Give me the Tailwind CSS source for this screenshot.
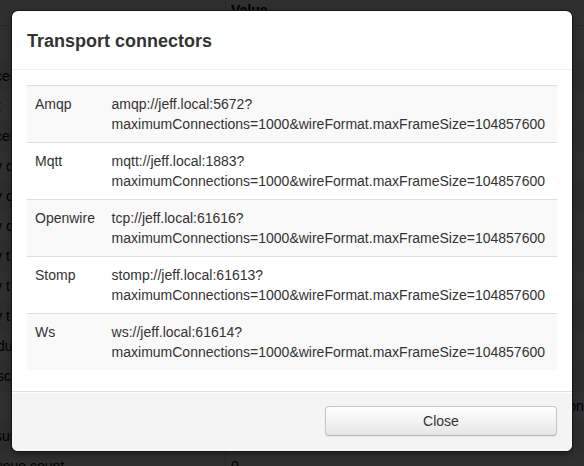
<!DOCTYPE html>
<html lang="en">
<head>
<meta charset="utf-8">
<title>Transport connectors</title>
<script src="https://cdn.jsdelivr.net/npm/@tailwindcss/browser@4"></script>
</head>
<body class="relative h-screen overflow-hidden bg-[#2f2f2f] font-['Liberation_Sans',Arial,sans-serif] text-sm leading-5 text-[#333]">

<!-- Dimmed page behind the dialog -->
<div class="absolute inset-0 overflow-hidden text-black" aria-hidden="true">
  <div class="flex h-[26px] border-b border-[#262626] font-bold"><div class="w-[225px] shrink-0"></div><div class="border-l border-[#262626] pl-[5px]">Value</div></div>
  <div class="h-[35px] bg-[#2f2f2f]"></div>
  <div class="h-[30px] bg-[#2d2d2d] pt-[5px]"><span class="-ml-[5px]">cer</span></div>
  <div class="h-[30px] bg-[#2f2f2f] pt-[5px] text-[#001a29]"><span class="-ml-[3px]">t</span></div>
  <div class="h-[30px] bg-[#2d2d2d] pt-[5px]"><span class="-ml-[5px]">cer</span></div>
  <div class="h-[30px] bg-[#2f2f2f] pt-[5px]"><span class="-ml-[5px]">y c</span></div>
  <div class="h-[30px] bg-[#2d2d2d] pt-[5px]"><span class="-ml-[5px]">y c</span></div>
  <div class="h-[30px] bg-[#2f2f2f] pt-[5px]"><span class="-ml-[5px]">y c</span></div>
  <div class="h-[30px] bg-[#2d2d2d] pt-[5px]"><span class="-ml-[5px]">y t</span></div>
  <div class="h-[30px] bg-[#2f2f2f] pt-[5px]"><span class="-ml-[5px]">y t</span></div>
  <div class="h-[30px] bg-[#2d2d2d] pt-[5px]"><span class="-ml-[5px]">y t</span></div>
  <div class="h-[30px] bg-[#2f2f2f] pt-[5px]"><span class="-ml-[3px]">du</span></div>
  <div class="h-[30px] bg-[#2d2d2d] pt-[5px]"><span class="-ml-[3px]">sc</span></div>
  <div class="flex h-[30px] justify-end bg-[#2f2f2f] pt-[5px]"><span class="-mr-[3px]">onl</span></div>
  <div class="h-[30px] bg-[#2d2d2d] pt-[5px]"><span class="-ml-[5px]">sur</span></div>
  <div class="flex h-[30px] bg-[#2f2f2f]"><div class="w-[225px] shrink-0 pt-[5px]"><span class="-ml-[5px]">ueue count</span></div><div class="border-l border-[#262626] pt-[5px] pl-[5px]">0</div></div>
</div>

<!-- Dialog -->
<section role="dialog" aria-labelledby="dialog-title" class="relative mx-3 mt-[11px] overflow-hidden rounded-md bg-white shadow-[0_0_0_1px_#161616,0_3px_7px_rgba(0,0,0,0.4)]">
  <header class="border-b border-[#eee] px-[15px] pt-[15px] pb-[13px]">
    <h1 id="dialog-title" class="text-lg leading-[30px] font-bold">Transport connectors</h1>
  </header>
  <div class="px-[15px] pt-[15px] pb-[21px]">
    <table class="w-full text-left">
      <tbody>
        <tr class="border-t border-[#ddd] bg-[#f9f9f9] align-top"><th scope="row" class="p-2 font-normal">Amqp</th><td class="p-2">amqp://jeff.local:5672?<br>maximumConnections=1000&amp;wireFormat.maxFrameSize=104857600</td></tr>
        <tr class="border-t border-[#ddd] align-top"><th scope="row" class="p-2 font-normal">Mqtt</th><td class="p-2">mqtt://jeff.local:1883?<br>maximumConnections=1000&amp;wireFormat.maxFrameSize=104857600</td></tr>
        <tr class="border-t border-[#ddd] bg-[#f9f9f9] align-top"><th scope="row" class="p-2 font-normal">Openwire</th><td class="p-2">tcp://jeff.local:61616?<br>maximumConnections=1000&amp;wireFormat.maxFrameSize=104857600</td></tr>
        <tr class="border-t border-[#ddd] align-top"><th scope="row" class="p-2 font-normal">Stomp</th><td class="p-2">stomp://jeff.local:61613?<br>maximumConnections=1000&amp;wireFormat.maxFrameSize=104857600</td></tr>
        <tr class="border-t border-[#ddd] bg-[#f9f9f9] align-top"><th scope="row" class="p-2 font-normal">Ws</th><td class="p-2">ws://jeff.local:61614?<br>maximumConnections=1000&amp;wireFormat.maxFrameSize=104857600</td></tr>
      </tbody>
    </table>
  </div>
  <footer class="flex justify-end border-t border-[#ddd] bg-[#f4f4f4] px-[15px] pt-[14px] pb-[15px] shadow-[inset_0_1px_0_#fff]">
    <button type="button" class="h-[30px] w-[232px] rounded border border-[#c5c5c5] border-b-[#b3b3b3] bg-linear-to-b from-white to-[#e6e6e6] shadow-[inset_0_1px_0_rgba(255,255,255,0.2),0_1px_2px_rgba(0,0,0,0.05)]">Close</button>
  </footer>
</section>
</body>
</html>
